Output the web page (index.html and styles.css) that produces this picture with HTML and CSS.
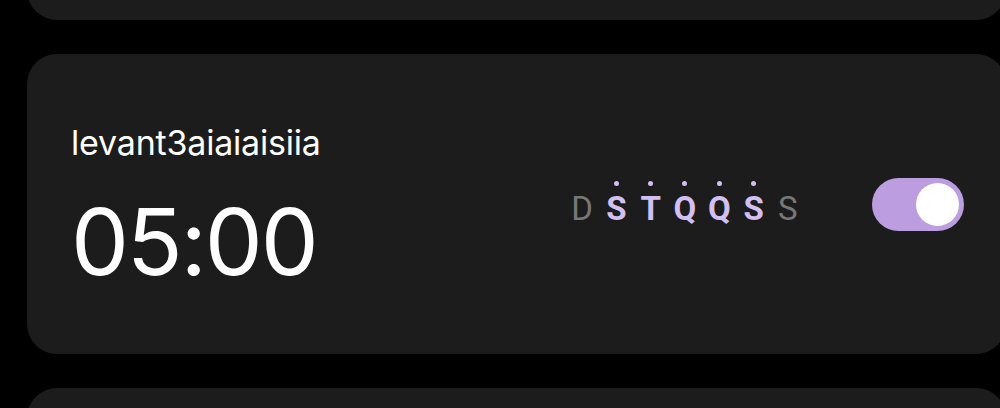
FILE: index.html
```html
<!DOCTYPE html>
<html>
<head>
<meta charset="utf-8">
<link rel="stylesheet" href="styles.css">
</head>
<body>
<div class="list">
  <div class="card card-prev"></div>
  <div class="card">
    <div class="info">
      <div class="label">levant3aiaiaisiia</div>
      <div class="time">05:00</div>
    </div>
    <div class="controls">
      <div class="days">
        <div class="day"><span class="dot off"></span><span class="letter">D</span></div>
        <div class="day on"><span class="dot"></span><span class="letter">S</span></div>
        <div class="day on"><span class="dot"></span><span class="letter">T</span></div>
        <div class="day on"><span class="dot"></span><span class="letter">Q</span></div>
        <div class="day on"><span class="dot"></span><span class="letter">Q</span></div>
        <div class="day on"><span class="dot"></span><span class="letter">S</span></div>
        <div class="day"><span class="dot off"></span><span class="letter">S</span></div>
      </div>
      <div class="toggle"><div class="thumb"></div></div>
    </div>
  </div>
  <div class="card"></div>
</div>
</body>
</html>
```
FILE: styles.css
```css
html, body {
  margin: 0;
  padding: 0;
  background: #000;
  width: 1000px;
  height: 408px;
  overflow: hidden;
}
.list {
  display: flex;
  flex-direction: column;
  gap: 34px;
  margin-top: -280px;
  margin-left: 27px;
}
.card {
  width: 979px;
  height: 300px;
  flex: none;
  background: #1c1c1c;
  border-radius: 30px;
  display: flex;
  align-items: center;
  justify-content: space-between;
  box-sizing: border-box;
  padding: 0 42px 0 44px;
}
.info {
  align-self: flex-start;
  padding-top: 68.5px;
  display: flex;
  flex-direction: column;
  color: #fff;
  font-family: Inter, "Noto Sans", sans-serif;
}
.label {
  font-size: 34px;
  line-height: 40px;
  letter-spacing: -0.2px;
}
.time {
  font-size: 92px;
  line-height: 100px;
  letter-spacing: -2.2px;
  margin-top: 29px;
}
.controls {
  display: flex;
  align-items: center;
  gap: 67px;
}
.days {
  display: flex;
  margin-bottom: 2px;
}
.day {
  width: 34.3px;
  display: flex;
  flex-direction: column;
  align-items: center;
  font-family: Roboto, sans-serif;
  font-size: 33px;
  color: #777;
}
.day.on {
  color: #d3c0f2;
  font-weight: 700;
}
.dot {
  width: 5px;
  height: 5px;
  border-radius: 50%;
  background: #d3c0f2;
  margin-bottom: 6px;
}
.dot.off {
  background: transparent;
}
.letter {
  line-height: 34px;
}
.toggle {
  width: 92px;
  height: 53px;
  border-radius: 27px;
  background: #bb9de0;
  display: flex;
  align-items: center;
  justify-content: flex-end;
  padding-right: 5px;
  box-sizing: border-box;
}
.thumb {
  width: 43px;
  height: 43px;
  border-radius: 50%;
  background: #fff;
}
```
